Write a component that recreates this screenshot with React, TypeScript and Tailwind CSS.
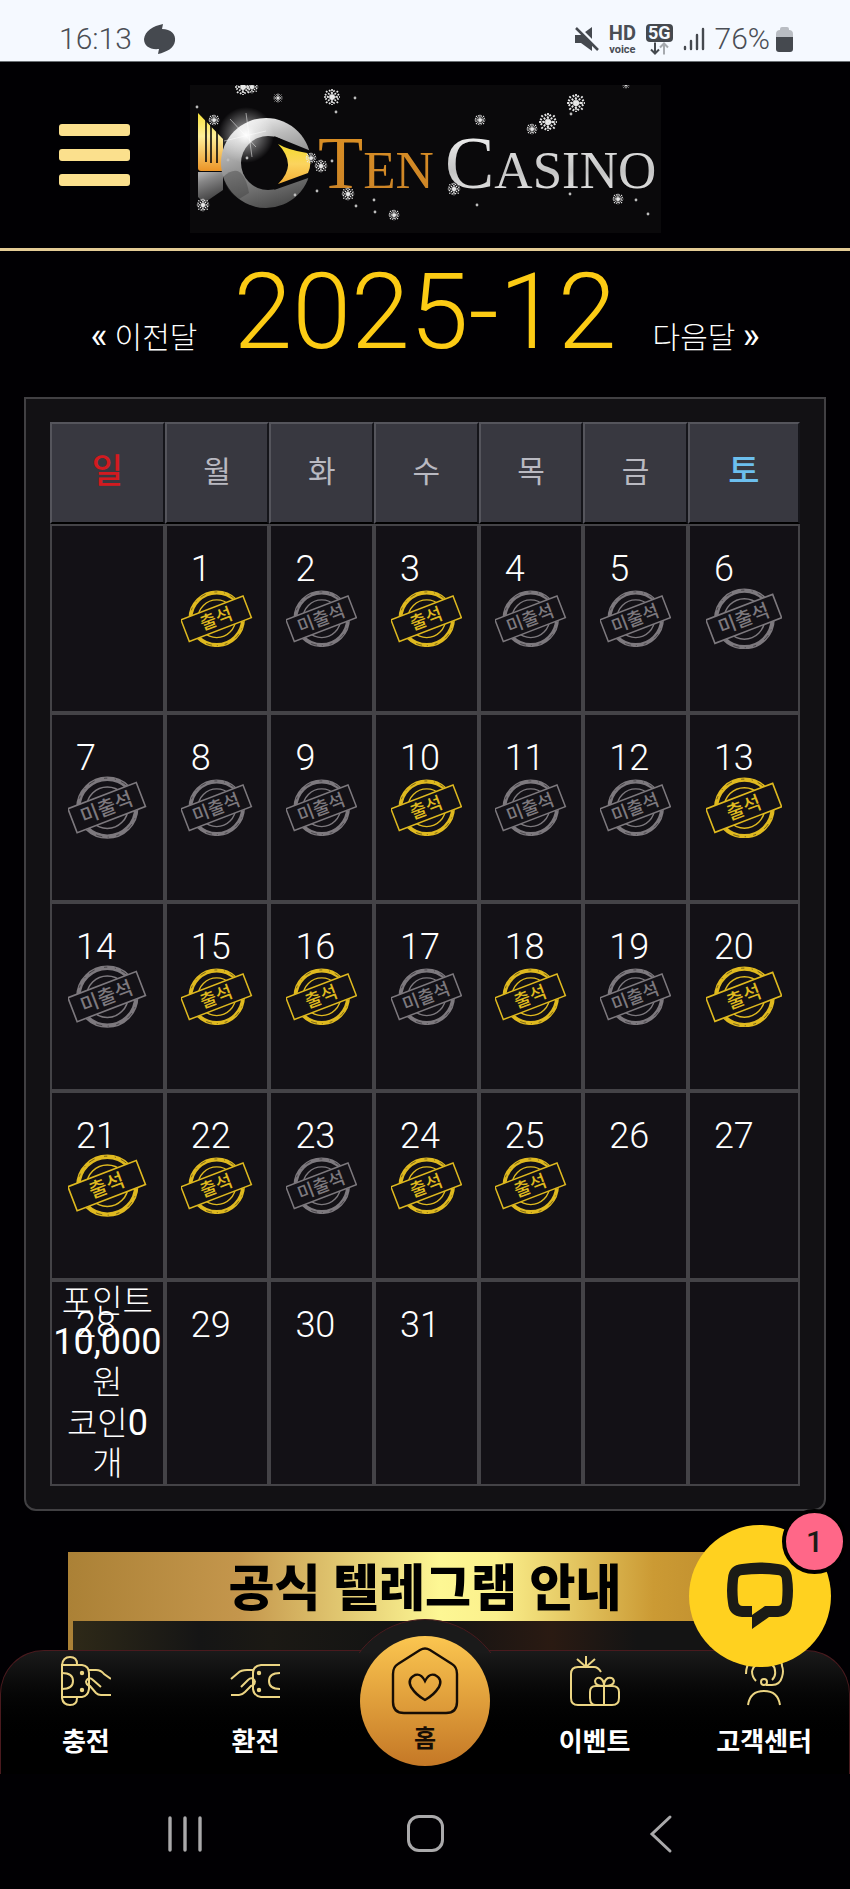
import React from "react";

const weekdays = ["일", "월", "화", "수", "목", "금", "토"];

const attended = [1, 3, 10, 13, 15, 16, 18, 20, 21, 22, 24, 25];
const lastChecked = 25;

// December 2025 starts on a Monday
const weeks = Array.from({ length: 5 }, (_, week) =>
  Array.from({ length: 7 }, (_, day) => {
    const date = week * 7 + day;
    return date >= 1 && date <= 31 ? date : null;
  })
);

const StatusBar = () => {
  return (
    <div className="flex h-[62px] items-end justify-between border-b border-[#6b7074] bg-[#f5f9ff] pr-[57px] pb-1 pl-[59px] text-[#4a4e55]">
      <div className="flex items-center gap-3">
        <span className="text-[30px] leading-9 font-light">16:13</span>
        <svg width="32" height="30" viewBox="0 0 32 30" fill="#45494f">
          <path d="M19 0 18 5c9 0 14 5 13 12-1 7-8 11-17 13l1-5C6 26 0 22 0 15 1 7 9 2 19 0z" />
        </svg>
      </div>

      <div className="flex items-center gap-[10px]">
        <svg width="24" height="24" viewBox="0 0 24 24" fill="#45494f">
          <path d="M0 8h6L17 0v24L6 16H0z" />
          <path d="M3 0 24 21" stroke="#f5f9ff" strokeWidth="3" />
          <path d="M1 1 23 23" stroke="#45494f" strokeWidth="2.5" />
        </svg>
        <div className="flex flex-col items-center">
          <span className="text-[20px] leading-5 font-bold">HD</span>
          <span className="text-[11px] leading-[13px] font-bold">voice</span>
        </div>
        <div className="flex flex-col items-center">
          <span className="rounded bg-[#45494f] px-[2px] text-[18px] leading-[18px] font-bold text-[#f5f9ff]">
            5G
          </span>
          <svg width="20" height="13" viewBox="0 0 20 12" fill="none" strokeWidth="2">
            <path d="M6 0v11M2 7l4 4 4-4" stroke="#45494f" />
            <path d="M15 12V1M11 5l4-4 4 4" stroke="#a5a9ae" />
          </svg>
        </div>
        <svg width="22" height="24" viewBox="0 0 22 24" stroke="#45494f" strokeWidth="2.4" strokeLinecap="round">
          <path d="M2 20v2M8 14v8M14 8v14M20 2v20" />
        </svg>
        <div className="flex items-center gap-[6px]">
          <span className="text-[30px] leading-9 font-light">76%</span>
          <svg width="17" height="25" viewBox="0 0 17 25">
            <path d="M4 3V2q0-2 2-2h5q2 0 2 2v1q4 0 4 4v4H0V7q0-4 4-4z" fill="#b9bdc3" />
            <path d="M0 10h17v12q0 3-3 3H3q-3 0-3-3z" fill="#45494f" />
          </svg>
        </div>
      </div>
    </div>
  );
};

const snowflakes = [
  [53, 2, 9], [62, 2, 7], [88, 13, 5], [142, 12, 9], [24, 35, 6], [13, 120, 7],
  [131, 81, 7], [121, 73, 6], [158, 109, 7], [204, 130, 6], [290, 35, 6], [342, 44, 6],
  [358, 37, 10], [386, 18, 10], [264, 104, 7], [428, 114, 6], [436, 0, 4],
];

const specks = [
  [7, 22], [146, 27], [165, 13], [38, 75], [57, 73], [105, 110], [127, 106], [166, 121],
  [184, 115], [185, 127], [287, 120], [380, 109], [446, 115], [458, 129], [142, 76], [381, 29],
];

const Logo = () => {
  return (
    <svg viewBox="0 0 471 148" className="w-[471px] shrink bg-[#0a090b]" role="img" aria-label="Ten Casino">
      <defs>
        <linearGradient id="crown" x1="0" y1="0" x2="0" y2="1">
          <stop offset="0" stopColor="#f8e23a" />
          <stop offset=".4" stopColor="#fff09a" />
          <stop offset="1" stopColor="#eb9426" />
        </linearGradient>
        <linearGradient id="eye" x1="0" y1="0" x2="0" y2="1">
          <stop offset="0" stopColor="#f4dc2c" />
          <stop offset=".5" stopColor="#fbd45e" />
          <stop offset="1" stopColor="#f3ae35" />
        </linearGradient>
        <linearGradient id="ring" x1=".3" y1="0" x2=".6" y2="1">
          <stop offset="0" stopColor="#f1f1f1" />
          <stop offset=".25" stopColor="#bcbcbc" />
          <stop offset=".6" stopColor="#858585" />
          <stop offset="1" stopColor="#4a4a4a" />
        </linearGradient>
        <linearGradient id="silver" x1="0" y1="0" x2="0" y2="1">
          <stop offset="0" stopColor="#ffffff" />
          <stop offset=".6" stopColor="#c4c4c4" />
          <stop offset="1" stopColor="#f2f2f2" />
        </linearGradient>
        <linearGradient id="gold" x1="0" y1="0" x2="0" y2="1">
          <stop offset="0" stopColor="#dc9023" />
          <stop offset="1" stopColor="#ca8328" />
        </linearGradient>
        <radialGradient id="glow">
          <stop offset="0" stopColor="#fff" />
          <stop offset=".35" stopColor="#fff" stopOpacity=".45" />
          <stop offset="1" stopColor="#fff" stopOpacity="0" />
        </radialGradient>
      </defs>
      <path d="M8 28 33 54V86H11q-3 0-3-3z" fill="url(#crown)" />
      <path d="M16 35v42M21 40v38M27 47v31" stroke="#0a090b" strokeWidth="1.6" />
      <path d="M8 87h25v18L14 118l-6-6z" fill="url(#ring)" opacity=".7" />
      <circle cx="76" cy="78" r="45" fill="url(#ring)" />
      <path d="M33 92q20-18 26 16l-10 6q-13-8-16-22z" fill="#333" opacity=".35" />
      <circle cx="78" cy="78" r="27" fill="#0a090b" />
      <path d="M84 51 121 66v26L84 105 100 78z" fill="#0a090b" />
      <path d="M88 59q10 6 29 9 6 9 1 20l-30 11q20-19 0-40z" fill="url(#eye)" />
      <circle cx="56" cy="50" r="28" fill="url(#glow)" />
      <path d="M40 34 66 62M56 28 62 72M34 56 76 46" stroke="#fff" strokeOpacity=".5" />
      <g fontFamily="'Liberation Serif', serif" fontSize="53">
        <text x="128" y="103" fill="url(#gold)">
          <tspan fontSize="74">T</tspan>
          <tspan>EN</tspan>
        </text>
        <text x="255" y="103" fill="url(#silver)">
          <tspan fontSize="74">C</tspan>
          <tspan>ASINO</tspan>
        </text>
      </g>
      {snowflakes.map(([x, y, r], i) => (
        <g key={i} transform={`translate(${x} ${y})`} stroke="#e8e8e8" fill="none">
          <path
            d="M0-8V8M-8 0H8M-6-6 6 6M-6 6 6-6M-3-7 0-4 3-7M-3 7 0 4 3 7M-7-3-4 0-7 3M7-3 4 0 7 3"
            strokeWidth="1.6"
            strokeDasharray="2 1"
            transform={`scale(${r / 9})`}
          />
          <circle r={r / 3} fill="#e8e8e8" stroke="none" opacity=".8" />
        </g>
      ))}
      {specks.map(([x, y], i) => (
        <circle key={i} cx={x} cy={y} r="1.4" fill="#bdbdbd" />
      ))}
    </svg>
  );
};

const Stamp = ({ present }: { present: boolean }) => {
  const color = present ? "#dfb91f" : "#7d797e";

  return (
    <svg viewBox="0 0 72 58" className="inline-block w-[71%] align-middle" fill="none" stroke={color}>
      <circle cx="36" cy="29" r="26.5" strokeWidth="4" />
      <circle cx="36" cy="29" r="27" stroke="#131116" strokeWidth=".8" strokeDasharray="3 7 1 5 6 9" opacity=".6" />
      <circle cx="36" cy="29" r="19" strokeWidth="1.4" />
      <g transform="rotate(-21 36 29)">
        <rect x="2" y="17" width="67" height="23.5" fill="#131116" strokeWidth="1.5" />
        <text x="35.5" y="35" textAnchor="middle" fontSize="18" fontWeight="500" fill={color} stroke="none">
          {present ? "출석" : "미출석"}
        </text>
      </g>
    </svg>
  );
};

const Calendar = () => {
  return (
    <div className="mx-6 mt-8 rounded-b-xl border-2 border-[#414043] bg-[#121114] px-6 py-[23px]">
      <table className="w-full table-fixed border-separate border-spacing-0">
        <colgroup>
          <col className="w-[15.3%]" />
          <col span={5} className="w-[13.95%]" />
          <col />
        </colgroup>
        <thead>
          <tr>
            {weekdays.map((day, i) => (
              <th
                key={day}
                className={`h-[102px] border-2 border-t-[#55555c] border-r-[#15151a] border-b-black border-l-[#55555c] bg-[#383840] pb-1 ${
                  i === 0
                    ? "text-[34px] font-medium text-[#d31a1f]"
                    : i === 6
                      ? "text-[34px] font-medium text-[#6cbfee]"
                      : "text-[30px] font-normal text-[#b9b9c1]"
                }`}
              >
                {day}
              </th>
            ))}
          </tr>
        </thead>
        <tbody>
          {weeks.map((week, w) => (
            <tr key={w}>
              {week.map((date, d) => (
                <td
                  key={d}
                  className="relative h-[189px] border-2 border-[#444347] bg-[#131116] p-0 text-center align-middle"
                >
                  {date && (
                    <span className="absolute top-[23px] left-6 text-[36px] leading-10 font-light">
                      {date}
                    </span>
                  )}
                  {date && date <= lastChecked && (
                    <Stamp present={attended.includes(date)} />
                  )}
                  {date === 28 && (
                    <div className="relative text-[33px] leading-10 font-light">
                      포인트
                      <br />
                      <span className="text-[36px] font-normal">10,000</span>
                      <br />
                      원
                      <br />
                      코인<span className="text-[36px] font-normal">0</span>
                      <br />개
                    </div>
                  )}
                </td>
              ))}
            </tr>
          ))}
        </tbody>
      </table>
    </div>
  );
};

const DepositIcon = () => (
  <svg width="50" height="50" viewBox="0 0 50 50" fill="none" stroke="#ecd583" strokeWidth="2">
    <path d="M1 8v34q1 7 8 7t7-7v-1M1 9q1-8 8-8t7 7v1M1 9h20q7 1 7 8v16q-1 7-7 8H1" />
    <path d="M1 17q11 0 11 8T1 33M28 14h7q5 0 8 4l7 5M25 25q3-5 7-1l8 7M25 25q0 4 4 5l6 7q2 2 5 2h10" />
    <circle cx="21" cy="17" r="1.2" fill="#ecd583" />
    <circle cx="21" cy="34" r="1.2" fill="#ecd583" />
  </svg>
);

const WithdrawIcon = () => (
  <svg width="50" height="50" viewBox="0 0 50 50" fill="none" stroke="#ecd583" strokeWidth="2">
    <path d="M50 9H31q-8 1-8 8v16q1 7 8 8h19M50 17q-11 0-11 8t11 8" />
    <path d="M23 14h-6q-6 0-9 3l-7 6M25 25q-3-5-7-1l-7 7M25 25q0 4-4 5l-6 6q-3 3-6 3H1" />
    <circle cx="29" cy="17" r="1.2" fill="#ecd583" />
    <circle cx="29" cy="34" r="1.2" fill="#ecd583" />
  </svg>
);

const EventIcon = () => (
  <svg width="50" height="50" viewBox="0 0 50 50" fill="none" stroke="#ecd583" strokeWidth="2">
    <path d="M16 0v11M7 3l9 8 9-8M31 16q-3-5-7-5H8q-7 0-7 7v24q0 7 7 7h34q7 0 7-7V36q0-6-7-6H26q-6 0-6 6v6q0 7 6 7M34 30v19" />
    <path d="M34 30q-9 0-9-5 1-4 5-3 4 2 4 8 0-6 4-8 5-1 6 3 0 5-10 5z" />
  </svg>
);

const SupportIcon = () => (
  <svg width="50" height="50" viewBox="0 0 50 50" fill="none" stroke="#ecd583" strokeWidth="2">
    <path d="M7 18Q7 1 25 1t18 9q2 5 0 11-2 8-10 8h-6M13 15q0 6 4 10M13 15q2-8 12-8 11 0 11 8 1 5-3 9" />
    <circle cx="25" cy="26" r="3" />
    <path d="M9 49q2-14 16-14t16 14" />
  </svg>
);

const HomeIcon = () => (
  <svg width="68" height="68" viewBox="0 0 68 68" fill="none" stroke="#160d05" strokeWidth="2.4">
    <path d="M29 3q5-3 10 0l22 14q5 3 5 10v28q0 11-11 11H13Q2 66 2 55V27q0-7 5-10z" />
    <path d="M34 34q-4-8-10-6-8 4-4 12 5 8 14 13 9-5 14-13 4-8-4-12-6-2-10 6z" />
  </svg>
);

const NavItem = ({ label, children }: { label: string; children: React.ReactNode }) => {
  return (
    <a href="#" className="flex flex-col items-center gap-5 pt-[5px]">
      {children}
      <span className="text-[26px] leading-8 font-bold">{label}</span>
    </a>
  );
};

const BottomNav = () => {
  return (
    <nav className="relative grid h-[124px] grid-cols-5 rounded-t-[44px] border border-b-0 border-[#4a1a1e] bg-linear-to-b from-[#1a1a1a] to-black to-80%">
      <div className="absolute -top-8 left-1/2 h-[34px] w-[164px] -translate-x-1/2 overflow-hidden">
        <div className="size-[164px] rounded-full border border-[#4a1a1e] bg-[#1a1a1a]" />
      </div>
      <NavItem label="충전">
        <DepositIcon />
      </NavItem>
      <NavItem label="환전">
        <WithdrawIcon />
      </NavItem>
      <div className="flex justify-center">
        <a
          href="#"
          className="relative -mt-[15px] flex size-[130px] shrink-0 flex-col items-center rounded-full bg-linear-to-b from-[#fbc650] to-[#c47826] pt-[11px] text-[#160d05]"
        >
          <HomeIcon />
          <span className="mt-2 text-[24px] leading-8 font-bold">홈</span>
        </a>
      </div>
      <NavItem label="이벤트">
        <EventIcon />
      </NavItem>
      <NavItem label="고객센터">
        <SupportIcon />
      </NavItem>

      {/* live chat launcher */}
      <button
        type="button"
        aria-label="채팅"
        className="absolute -top-[126px] right-[18px] flex size-[142px] items-center justify-center rounded-full bg-[#ffd11f]"
      >
        <svg width="68" height="68" viewBox="0 0 68 68">
          <path
            fillRule="evenodd"
            fill="#1b1b16"
            d="M16 2Q34-1 52 2 65 3 66 16q2 13 0 25-1 13-14 14H43L26 67V55H16Q3 54 2 41 0 29 2 16 3 3 16 2zM17 13q-5 0-5 5-1 10 0 20 0 6 5 6H26v9l13-9H51q5 0 5-6 1-10 0-20 0-5-5-5-17-2-34 0z"
          />
        </svg>
        <span className="absolute -top-4 -right-4 flex size-[65px] items-center justify-center rounded-full border-4 border-black bg-[#ff6788] text-[30px] font-medium text-[#1b1b16]">
          1
        </span>
      </button>
    </nav>
  );
};

const App = () => {
  return (
    <div className="min-h-screen overflow-hidden bg-[#010003] font-['Roboto','Noto_Sans_CJK_KR',sans-serif] text-white">
      <StatusBar />

      <header className="relative flex h-[189px] justify-center border-b-[3px] border-[#e3cb95] pt-[23px]">
        <button
          type="button"
          aria-label="메뉴"
          className="absolute top-[62px] left-[59px] flex w-[71px] flex-col gap-[13px]"
        >
          <span className="h-3 rounded-[3px] bg-[#fbe08d]" />
          <span className="h-3 rounded-[3px] bg-[#fbe08d]" />
          <span className="h-3 rounded-[3px] bg-[#fbe08d]" />
        </button>
        <div>
          <Logo />
        </div>
      </header>

      <main>
        <div className="flex items-baseline justify-center gap-9 pt-2">
          <a href="#" className="text-[30px] font-light">
            <span className="text-[36px] leading-9 font-normal">«</span> 이전달
          </a>
          <h1 className="text-[106px] leading-[106px] font-light text-[#fccb14]">2025-12</h1>
          <a href="#" className="text-[30px] font-light">
            다음달 <span className="text-[36px] leading-9 font-normal">»</span>
          </a>
        </div>

        <Calendar />

        <section className="mx-[68px] mt-[41px] bg-[linear-gradient(90deg,#ab8136_0%,#c4964c_24%,#fdf794_52%,#fbf08c_60%,#cb9a34_82%,#b7862a_100%)]">
          <div className="flex h-[69px] items-center justify-center">
            <h2 className="pt-1 text-[50px] leading-[60px] font-black text-black">
              공식 텔레그램 안내
            </h2>
          </div>
          <div className="mx-[5px] h-[29px] bg-[linear-gradient(90deg,#2e2918_0%,#151515_18%,#1b1914_28%,#111213_50%,#2a1a12_68%,#141414_80%)]" />
        </section>
      </main>

      <BottomNav />

      <div className="flex h-[115px] items-center justify-between pt-1 pr-[177px] pl-[166px]">
        <button type="button" aria-label="최근 앱">
          <svg width="36" height="38" viewBox="0 0 36 38" stroke="#aaa9ab" strokeWidth="3.4" strokeLinecap="round">
            <path d="M4 3v32M19 3v32M34 3v32" />
          </svg>
        </button>
        <button type="button" aria-label="홈" className="size-[37px] rounded-xl border-[3px] border-[#aaa9ab]" />
        <button type="button" aria-label="뒤로">
          <svg width="24" height="40" viewBox="0 0 24 40" fill="none" stroke="#aaa9ab" strokeWidth="3" strokeLinecap="round">
            <path d="M21 3 3 20l18 17" />
          </svg>
        </button>
      </div>
    </div>
  );
};
export default App;
